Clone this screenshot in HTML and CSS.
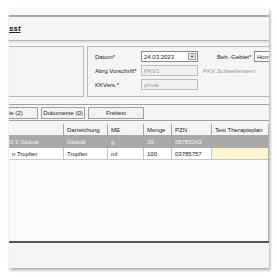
FILE: index.html
```html
<!DOCTYPE html>
<html lang="de">
<head>
<meta charset="utf-8">
<link rel="stylesheet" href="styles.css">
</head>
<body>
<div class="frame">
  <div class="toolbar"></div>
  <div class="titlebar"><span class="title">sst</span></div>
  <div class="groups">
    <div class="group group-left"></div>
    <div class="group group-right">
      <div class="row"><span class="label">Datum*</span><span class="input date"><span class="val">24.03.2023</span><span class="drop">▼</span></span><span class="label label2">Beh.-Gebiet*</span><span class="input cut"><span class="val">Hom</span></span></div>
      <div class="row"><span class="label">Abrg.Vorschrift*</span><span class="input disabled"><span class="val">PKV1</span></span><span class="hint">PKV Schwellenwert</span></div>
      <div class="row"><span class="label">KKVers.*</span><span class="input disabled"><span class="val">privat</span></span></div>
    </div>
  </div>
  <div class="tabstrip">
    <span class="tab tab-first">ie (2)</span>
    <span class="tab tab-doc">Dokumente (0)</span>
    <span class="tab tab-free">Freitext</span>
  </div>
  <div class="grid">
    <div class="grow head">
      <span class="c c1"></span><span class="c c2">Darreichung</span><span class="c c3">ME</span><span class="c c4">Menge</span><span class="c c5">PZN</span><span class="c c6">Text Therapieplan</span>
    </div>
    <div class="grow sel">
      <span class="c c1">D 3 Globuli</span><span class="c c2">Globuli</span><span class="c c3">g</span><span class="c c4">20</span><span class="c c5">08783243</span><span class="c c6"></span>
    </div>
    <div class="grow norm">
      <span class="c c1 pad">n Tropfen</span><span class="c c2">Tropfen</span><span class="c c3">ml</span><span class="c c4">100</span><span class="c c5">03785757</span><span class="c c6 yellow"></span>
    </div>
    <div class="grid-empty"></div>
  </div>
  <div class="footer"></div>
</div>
</body>
</html>
```

FILE: styles.css
```css
* { box-sizing: border-box; }
html, body { margin: 0; padding: 0; background: #ffffff; }
body {
  width: 277px;
  height: 277px;
  overflow: hidden;
  font-family: "Liberation Sans", Arial, sans-serif;
  font-size: 6px;
  color: #222;
}
.frame {
  margin: 8px 0 0 9px;
  width: 260px;
  height: 260px;
  background: #f5f5f5;
  box-shadow: 1px 2px 3px rgba(0,0,0,0.35);
  display: flex;
  flex-direction: column;
  overflow: hidden;
}
.toolbar {
  height: 9px;
  border-bottom: 2px solid #a8a8a8;
  background: #f8f8f8;
  flex: none;
}
.titlebar {
  height: 24px;
  flex: none;
  display: flex;
  align-items: center;
  border-bottom: 1px solid #b5b5b5;
  box-shadow: 0 2px 0 #e4e4e4;
}
.title {
  font-size: 8px;
  font-weight: bold;
  font-style: italic;
  text-decoration: underline;
  color: #1c1c3a;
}
.groups {
  flex: none;
  display: flex;
  gap: 3px;
  margin-top: 5px;
  height: 51px;
}
.group {
  border: 1px solid #b8b8b8;
  height: 51px;
}
.group-left { flex: none; width: 75px; border-left: none; }
.group-right {
  flex: 1;
  min-width: 0;
  overflow: hidden;
  border-right: none;
  display: flex;
  flex-direction: column;
  padding: 4px 0 0 7px;
  gap: 3px;
  white-space: nowrap;
}
.row { display: flex; align-items: center; height: 11px; }
.label { flex: none; width: 46px; color: #222; }
.label2 { width: 37px; margin-left: 19px; }
.input {
  flex: none;
  width: 57px;
  height: 11px;
  background: #fff;
  border: 1px solid #8a8a8a;
  display: flex;
  align-items: center;
  padding-left: 2px;
}
.input.disabled {
  background: #f0f0f0;
  border-color: #bcbcbc;
  color: #9a9a9a;
}
.input.cut { flex: 1; width: auto; min-width: 0; border-right: none; }
.drop {
  margin-left: auto;
  width: 8px;
  height: 7px;
  margin-right: 1px;
  border: 1px solid #9a9a9a;
  background: #e9e9e9;
  font-size: 4px;
  line-height: 5px;
  text-align: center;
  color: #222;
}
.hint {
  margin-left: 5px;
  font-style: italic;
  color: #9a9a9a;
}
.tabstrip {
  flex: none;
  margin-top: 7px;
  height: 17px;
  border-top: 1px solid #a0a0a0;
  border-bottom: 1px solid #a0a0a0;
  display: flex;
  align-items: center;
  gap: 3px;
  padding-top: 1px;
}
.tab {
  height: 12px;
  border: 1px solid #a0a0a0;
  display: flex;
  align-items: center;
  justify-content: center;
  background: #f2f2f2;
}
.tab-first { width: 29px; border-left: none; justify-content: flex-start; }
.tab-doc { width: 44px; }
.tab-free { width: 56px; }
.grid {
  flex: none;
  margin-top: 3px;
  background: #fafafa;
  border-right: 1px solid #b0b0b0;
  height: 117px;
  display: flex;
  flex-direction: column;
}
.grow { display: flex; height: 12px; flex: none; }
.c {
  display: flex;
  align-items: center;
  padding-left: 3px;
  border-right: 1px solid #c8c8c8;
  white-space: nowrap;
  overflow: hidden;
}
.c1 { width: 55px; padding-left: 0; }
.c2 { width: 44px; }
.c3 { width: 36px; }
.c4 { width: 28px; }
.c5 { width: 40px; }
.c6 { flex: 1; border-right: none; }
.head { background: #f4f4f4; border-bottom: 1px solid #a8a8a8; }
.head .c { border-right-color: #a8a8a8; }
.sel { background: #a9a9a9; color: #f4f4f4; }
.sel .c { border-right: none; }
.norm { background: #fff; border-bottom: 1px solid #c8c8c8; }
.pad { padding-left: 3px; }
.yellow { background: #fff5cc; }
.grid-empty { flex: 1; }
.footer {
  flex: none;
  border-top: 2px solid #555;
  height: 26px;
  background: #f5f5f5;
}
```
